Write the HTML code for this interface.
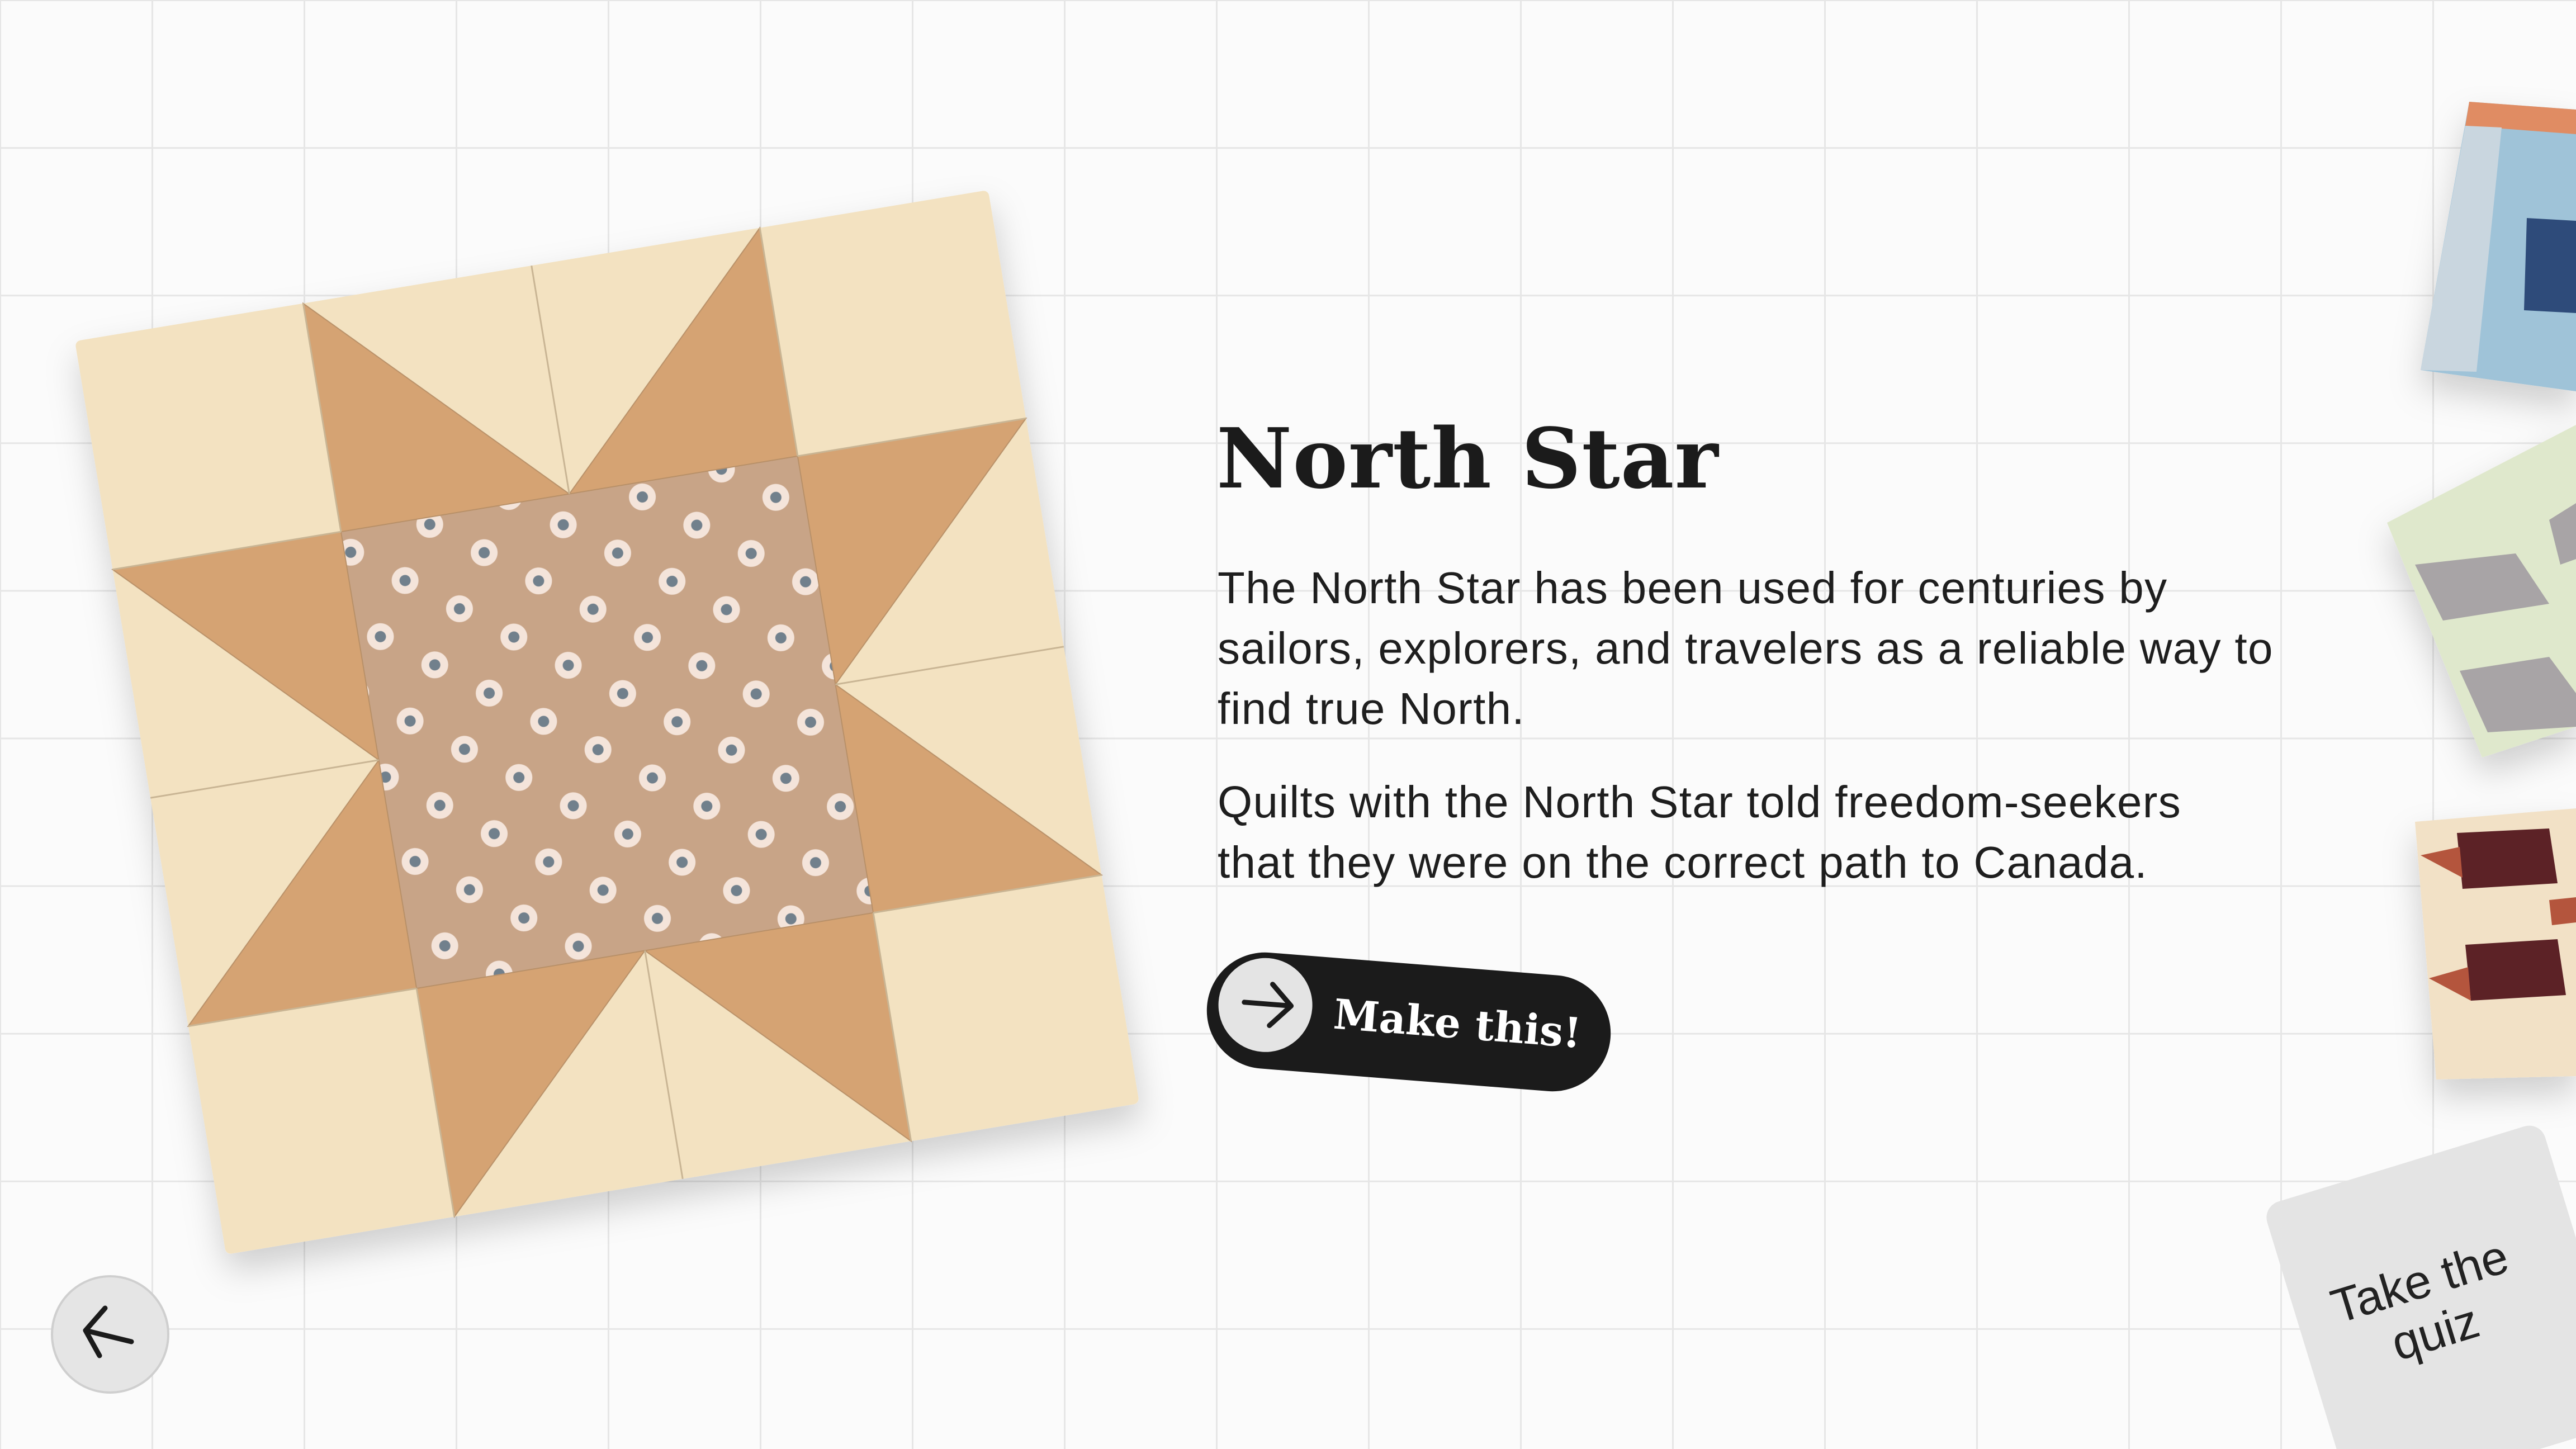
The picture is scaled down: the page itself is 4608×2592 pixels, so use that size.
<!DOCTYPE html>
<html><head><meta charset="utf-8"><style>
html,body{margin:0;padding:0}
body{width:4608px;height:2592px;overflow:hidden;position:relative;background:#fbfbfb;
background-image:linear-gradient(to right,#e6e6e6 0,#e6e6e6 3px,transparent 3px),linear-gradient(to bottom,#e6e6e6 0,#e6e6e6 3px,transparent 3px);
background-size:272px 264.1px;background-position:-1px -1px;font-family:"Liberation Sans",sans-serif}
.abs{position:absolute}
h1{position:absolute;left:2176px;top:733px;margin:0;font-family:"DejaVu Serif","Liberation Serif",serif;font-weight:bold;font-size:148px;color:#1b1b1b;letter-spacing:1px}
.p{position:absolute;left:2178px;font-size:80px;letter-spacing:1.3px;line-height:108px;color:#1e1e1e;white-space:nowrap}
</style></head><body>
<svg class="abs" style="left:0;top:0" width="4608" height="2592" viewBox="0 0 4608 2592">
<defs>
<filter id="sh" x="-20%" y="-20%" width="140%" height="140%"><feDropShadow dx="0" dy="30" stdDeviation="30" flood-color="#000" flood-opacity="0.18"/></filter>
<pattern id="fl" width="150" height="160" patternUnits="userSpaceOnUse" patternTransform="rotate(-10)">
<rect width="150" height="160" fill="#c8a487"/>
<g fill="#f4e4da"><circle cx="40" cy="40" r="24"/><circle cx="115" cy="120" r="24"/></g>
<g fill="#71808c"><circle cx="40" cy="40" r="10"/><circle cx="115" cy="120" r="10"/></g>
</pattern>
</defs>
<g filter="url(#sh)" transform="translate(1086 1292) rotate(-9.4) translate(-828 -828)">
<rect x="0" y="0" width="1656" height="1656" rx="10" fill="#f3e2c1"/>
<g fill="#d5a373" stroke="#b89068" stroke-width="2">
<polygon points="414,0 414,414 828,414"/><polygon points="1242,0 828,414 1242,414"/>
<polygon points="1656,414 1242,414 1242,828"/><polygon points="1656,1242 1242,828 1242,1242"/>
<polygon points="1242,1656 1242,1242 828,1242"/><polygon points="414,1656 828,1242 414,1242"/>
<polygon points="0,1242 414,1242 414,828"/><polygon points="0,414 414,828 414,414"/>
</g>
<rect x="414" y="414" width="828" height="828" fill="url(#fl)" stroke="#b89068" stroke-width="2"/>
<g stroke="#c9b594" stroke-width="3">
<line x1="414" y1="0" x2="414" y2="414"/><line x1="828" y1="0" x2="828" y2="414"/><line x1="1242" y1="0" x2="1242" y2="414"/>
<line x1="414" y1="1242" x2="414" y2="1656"/><line x1="828" y1="1242" x2="828" y2="1656"/><line x1="1242" y1="1242" x2="1242" y2="1656"/>
<line x1="0" y1="414" x2="414" y2="414"/><line x1="0" y1="828" x2="414" y2="828"/><line x1="0" y1="1242" x2="414" y2="1242"/>
<line x1="1242" y1="414" x2="1656" y2="414"/><line x1="1242" y1="828" x2="1656" y2="828"/><line x1="1242" y1="1242" x2="1656" y2="1242"/>
</g>
</g>
<g filter="url(#sh)">
<polygon points="4417,182 4608,196 4608,700 4330,662" fill="#9fc3d8"/>
<polygon points="4417,182 4608,196 4608,240 4410,225" fill="#e08c63"/>
<polygon points="4410,225 4475,228 4430,665 4330,662" fill="#c9d6df"/>
<polygon points="4520,390 4608,395 4608,560 4515,555" fill="#2f4c7a"/>
<polygon points="4270,935 4608,760 4608,1300 4440,1355" fill="#dfe8cc"/>
<polygon points="4320,1010 4500,990 4560,1080 4370,1110" fill="#a8a4a6"/>
<polygon points="4400,1200 4560,1175 4608,1240 4608,1300 4450,1310" fill="#a8a4a6"/>
<polygon points="4560,930 4608,900 4608,1000 4580,1010" fill="#a8a4a6"/>
<polygon points="4320,1470 4608,1446 4608,1925 4358,1931" fill="#f2e1c6"/>
<polygon points="4395,1490 4560,1482 4575,1580 4405,1590" fill="#5c2128"/>
<polygon points="4410,1690 4575,1680 4590,1780 4420,1790" fill="#5c2128"/>
<polygon points="4330,1530 4400,1515 4405,1570" fill="#b4553e"/>
<polygon points="4345,1750 4415,1730 4420,1790" fill="#b4553e"/>
<polygon points="4560,1610 4608,1605 4608,1650 4565,1655" fill="#b4553e"/>
</g>
<g transform="translate(4340 2330) rotate(-17)">
<rect x="-230" y="-250" width="520" height="560" rx="30" fill="#e4e4e4"/>
<text x="0" y="-10" font-family="Liberation Sans, sans-serif" font-size="86" fill="#222" text-anchor="middle">Take the</text>
<text x="0" y="85" font-family="Liberation Sans, sans-serif" font-size="86" fill="#222" text-anchor="middle">quiz</text>
</g>
<g transform="translate(2520 1828) rotate(4.5)">
<rect x="-362" y="-104" width="724" height="208" rx="104" fill="#1b1b1b"/>
<ellipse cx="-258" cy="-10" rx="84" ry="84" fill="#e4e4e4"/>
<path d="M-296,-12 L-218,-12 M-248,-48 L-212,-12 L-248,26" stroke="#1b1b1b" stroke-width="9" fill="none" stroke-linecap="round" stroke-linejoin="round"/>
<text x="-135" y="22" font-family="DejaVu Serif, Liberation Serif, serif" font-weight="bold" font-size="74" fill="#fff">Make this!</text>
</g>
<circle cx="197" cy="2387" r="104" fill="#e5e5e5" stroke="#cfcfcf" stroke-width="4"/>
<path d="M235,2400 L153,2380 M188,2340 L153,2380 L178,2425" stroke="#1b1b1b" stroke-width="9" fill="none" stroke-linecap="round" stroke-linejoin="round"/>
</svg>
<h1>North Star</h1>
<div class="p" style="top:998px">The North Star has been used for centuries by<br>sailors, explorers, and travelers as a reliable way to<br>find true North.</div>
<div class="p" style="top:1381px">Quilts with the North Star told freedom-seekers<br>that they were on the correct path to Canada.</div>
</body></html>
